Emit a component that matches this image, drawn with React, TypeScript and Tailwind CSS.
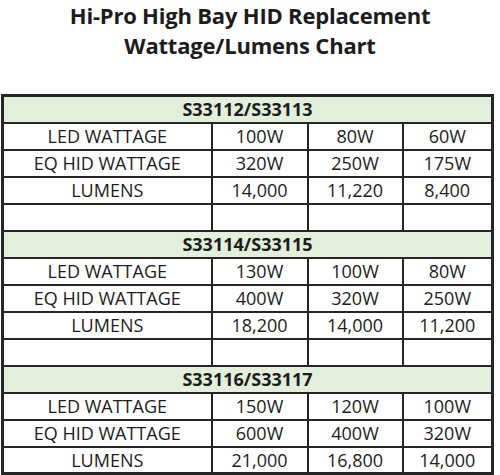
import React from 'react';

type Group = {
  model: string;
  rows: [string, string, string, string][];
};

const groups: Group[] = [
  {
    model: 'S33112/S33113',
    rows: [
      ['LED WATTAGE', '100W', '80W', '60W'],
      ['EQ HID WATTAGE', '320W', '250W', '175W'],
      ['LUMENS', '14,000', '11,220', '8,400'],
    ],
  },
  {
    model: 'S33114/S33115',
    rows: [
      ['LED WATTAGE', '130W', '100W', '80W'],
      ['EQ HID WATTAGE', '400W', '320W', '250W'],
      ['LUMENS', '18,200', '14,000', '11,200'],
    ],
  },
  {
    model: 'S33116/S33117',
    rows: [
      ['LED WATTAGE', '150W', '120W', '100W'],
      ['EQ HID WATTAGE', '600W', '400W', '320W'],
      ['LUMENS', '21,000', '16,800', '14,000'],
    ],
  },
];

const cell = 'border-2 border-[#262626] h-[27px] p-0 text-center align-middle leading-none';

const App = () => {
  return (
    <div className="w-[500px] h-[475px] bg-white overflow-hidden text-[#1c1c1c]" style={{ fontFamily: '"Open Sans", "Liberation Sans", sans-serif' }}>
      <h1 className="text-center font-bold text-[22px] leading-[30px] tracking-[-0.2px]">
        Hi-Pro High Bay HID Replacement
        <br />
        Wattage/Lumens Chart
      </h1>
      <div className="pl-[1px] pt-[34px]">
        <table className="w-[493px] table-fixed border-collapse border-[3px] border-[#262626] text-[18px]">
          <colgroup>
            <col className="w-[209px]" />
            <col className="w-[96px]" />
            <col className="w-[95px]" />
            <col />
          </colgroup>
          <tbody>
            {groups.map((g, gi) => (
              <React.Fragment key={g.model}>
                <tr className="bg-[#e2efda]">
                  <td colSpan={4} className={`${cell} font-bold`}>
                    {g.model}
                  </td>
                </tr>
                {g.rows.map((r) => (
                  <tr key={r[0]}>
                    {r.map((v, i) => (
                      <td key={i} className={cell}>
                        {v}
                      </td>
                    ))}
                  </tr>
                ))}
                {gi < groups.length - 1 && (
                  <tr>
                    <td className={cell}></td>
                    <td className={cell}></td>
                    <td className={cell}></td>
                    <td className={cell}></td>
                  </tr>
                )}
              </React.Fragment>
            ))}
          </tbody>
        </table>
      </div>
    </div>
  );
};

export default App;
